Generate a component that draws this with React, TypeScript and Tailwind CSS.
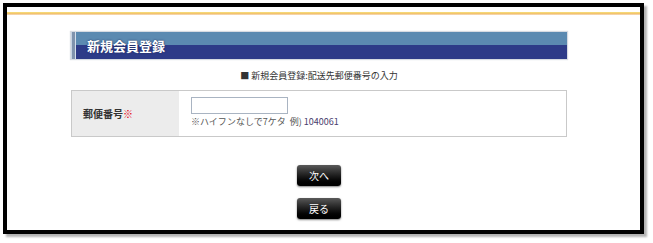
import React from 'react';

const font = { fontFamily: '"Noto Sans CJK JP", "Liberation Sans", sans-serif' };

const App: React.FC = () => {
  return (
    <div className="w-[653px] h-[243px] bg-white pl-[3px] pt-[3px]" style={font}>
      {/* Outer frame */}
      <div className="w-[641px] h-[231px] border-4 border-black bg-white shadow-[3px_3px_2px_rgba(0,0,0,0.3)] flex flex-col">
        {/* Top rule */}
        <div className="mt-[5px] h-[3px] bg-gradient-to-b from-[#f7e27a] via-[#f2c46e] to-[#f6d9c0]" />

        <div className="ml-[64px] w-[496px] flex flex-col">
          {/* Title bar */}
          <div className="mt-[17px] h-[27px] flex shadow-[0_0_1px_1px_#d6dbe2] bg-gradient-to-b from-[#5b8ab1] from-50% to-[#2d3b88] to-50%">
            <div className="w-[1px] bg-[#c5d3e3]" />
            <div className="w-[3px] bg-[#7f93ad]" />
            <div className="w-[1px] bg-[#d3deeb]" />
            <h1 className="pl-[11px] flex items-center text-[13px] font-bold text-white leading-none [text-shadow:0_0_2px_#1d2756]">
              新規会員登録
            </h1>
          </div>

          {/* Subtitle */}
          <p className="mt-[10px] text-center text-[9px] leading-[14px] text-[#333]">
            ■ 新規会員登録:配送先郵便番号の入力
          </p>

          {/* Form table */}
          <div className="mt-[7px] h-[47px] flex border border-[#c9c9c9]">
            <div className="w-[107px] bg-[#ececec] flex items-center pl-[11px] text-[10px] font-bold text-[#333]">
              郵便番号<span className="text-[#e60012]">※</span>
            </div>
            <div className="flex flex-col pl-[12px] pt-[6px]">
              <input type="text" className="w-[97px] h-[17px] border border-[#a9b4c2] bg-white" />
              <p className="mt-[2px] text-[9px] leading-[12px] text-[#555] whitespace-pre">
                ※ハイフンなしで7ケタ  例) <span className="text-[#4a3c6e]">1040061</span>
              </p>
            </div>
          </div>

          {/* Buttons */}
          <div className="mt-[28px] flex flex-col items-center gap-[12px]">
            <button className="w-[44px] h-[21px] rounded-[3px] bg-gradient-to-b from-[#5a5a5a] via-[#1e1e1e] to-[#000] text-white text-[10px] leading-none shadow-[0_1px_2px_rgba(0,0,0,0.5)]">
              次へ
            </button>
            <button className="w-[44px] h-[21px] rounded-[3px] bg-gradient-to-b from-[#5a5a5a] via-[#1e1e1e] to-[#000] text-white text-[10px] leading-none shadow-[0_1px_2px_rgba(0,0,0,0.5)]">
              戻る
            </button>
          </div>
        </div>
      </div>
    </div>
  );
};

export default App;
